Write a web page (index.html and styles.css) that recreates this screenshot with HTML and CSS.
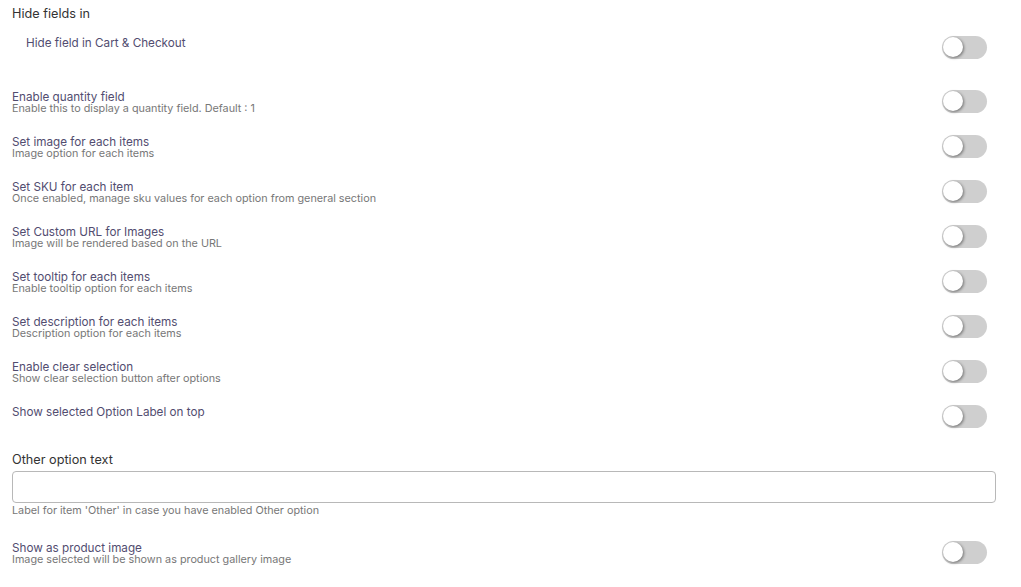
FILE: index.html
```html
<!DOCTYPE html>
<html lang="en">
<head>
    <meta charset="UTF-8">
    <meta name="viewport" content="width=device-width, initial-scale=1.0">
    <title>Field Settings</title>
    <link rel="stylesheet" href="styles.css">
</head>
<body>
    <div class="settings">
        <div class="section-title">Hide fields in</div>
        <div class="row sub">
            <div class="row-text">
                <div class="row-title">Hide field in Cart &amp; Checkout</div>
            </div>
            <span class="toggle"><span class="knob"></span></span>
        </div>

        <div class="rows">
            <div class="row">
                <div class="row-text">
                    <div class="row-title">Enable quantity field</div>
                    <div class="row-desc">Enable this to display a quantity field. Default : 1</div>
                </div>
                <span class="toggle"><span class="knob"></span></span>
            </div>
            <div class="row">
                <div class="row-text">
                    <div class="row-title">Set image for each items</div>
                    <div class="row-desc">Image option for each items</div>
                </div>
                <span class="toggle"><span class="knob"></span></span>
            </div>
            <div class="row">
                <div class="row-text">
                    <div class="row-title">Set SKU for each item</div>
                    <div class="row-desc">Once enabled, manage sku values for each option from general section</div>
                </div>
                <span class="toggle"><span class="knob"></span></span>
            </div>
            <div class="row">
                <div class="row-text">
                    <div class="row-title">Set Custom URL for Images</div>
                    <div class="row-desc">Image will be rendered based on the URL</div>
                </div>
                <span class="toggle"><span class="knob"></span></span>
            </div>
            <div class="row">
                <div class="row-text">
                    <div class="row-title">Set tooltip for each items</div>
                    <div class="row-desc">Enable tooltip option for each items</div>
                </div>
                <span class="toggle"><span class="knob"></span></span>
            </div>
            <div class="row">
                <div class="row-text">
                    <div class="row-title">Set description for each items</div>
                    <div class="row-desc">Description option for each items</div>
                </div>
                <span class="toggle"><span class="knob"></span></span>
            </div>
            <div class="row">
                <div class="row-text">
                    <div class="row-title">Enable clear selection</div>
                    <div class="row-desc">Show clear selection button after options</div>
                </div>
                <span class="toggle"><span class="knob"></span></span>
            </div>
            <div class="row">
                <div class="row-text">
                    <div class="row-title">Show selected Option Label on top</div>
                </div>
                <span class="toggle"><span class="knob"></span></span>
            </div>
        </div>

        <div class="field">
            <label class="field-label" for="otherText">Other option text</label>
            <input class="field-input" id="otherText" type="text">
            <div class="field-help">Label for item 'Other' in case you have enabled Other option</div>
        </div>

        <div class="row">
            <div class="row-text">
                <div class="row-title">Show as product image</div>
                <div class="row-desc">Image selected will be shown as product gallery image</div>
            </div>
            <span class="toggle"><span class="knob"></span></span>
        </div>
    </div>
</body>
</html>
```

FILE: styles.css
```css
/* Page */
body {
    margin: 0;
    font-family: Inter, "Noto Sans", sans-serif;
    background-color: #fff;
}

.settings {
    padding: 6px 25px 0 12px;
}

.section-title {
    font-size: 12.7px;
    line-height: 16px;
    color: #333;
}

/* Toggle rows */
.row {
    display: flex;
    justify-content: space-between;
    align-items: flex-start;
    height: 45px;
}

.row.sub {
    margin-top: 14px;
    height: 54px;
}

.row.sub .row-text {
    padding-left: 14px;
}

.row-text {
    padding-top: 1px;
}

.row-title {
    font-size: 11.7px;
    line-height: 13px;
    color: #524d70;
}

.row-desc {
    margin-top: -1px;
    font-size: 10.8px;
    line-height: 11px;
    color: #777;
}

/* Switch */
.toggle {
    position: relative;
    flex-shrink: 0;
    width: 45px;
    height: 23px;
    margin-right: 9px;
    border-radius: 12px;
    background-color: #cfcfcf;
}

.knob {
    position: absolute;
    top: 1px;
    left: 1px;
    width: 20px;
    height: 20px;
    border-radius: 50%;
    background-color: #fff;
    box-shadow: 1px 1px 3px rgba(0, 0, 0, 0.45);
}

/* Text field */
.field {
    margin-top: 2px;
    margin-bottom: 24px;
}

.field-label {
    display: block;
    font-size: 12.7px;
    line-height: 16px;
    color: #333;
    margin-bottom: 3px;
}

.field-input {
    display: block;
    box-sizing: border-box;
    width: 100%;
    height: 32px;
    margin: 0;
    border: 1px solid #b8b8b8;
    border-radius: 4px;
    background: #fff;
    font-family: inherit;
}

.field-help {
    margin-top: 2px;
    font-size: 10.8px;
    line-height: 12px;
    color: #777;
}
```
